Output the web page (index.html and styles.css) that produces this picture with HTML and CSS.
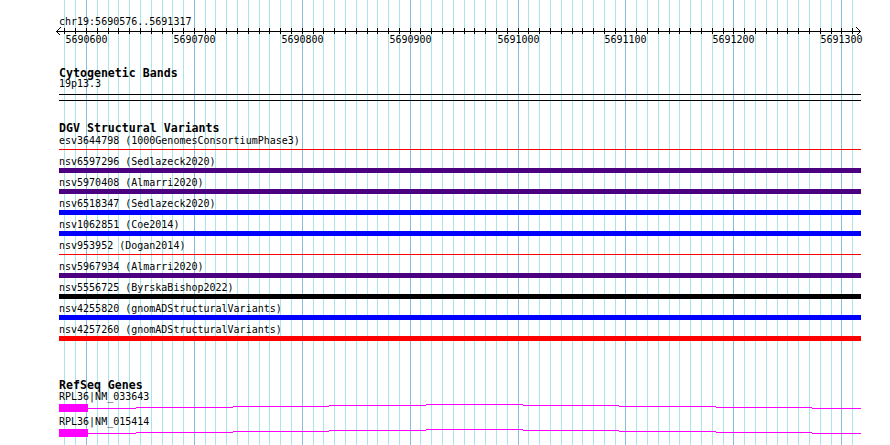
FILE: index.html
```html
<!DOCTYPE html>
<html>
<head>
  <meta charset="utf-8">
  <title>Genome Browser - chr19:5690576-5691317</title>
  <link rel="stylesheet" href="styles.css">
</head>
<body>
<div id="browser">

  <!-- base position guidelines, every 10bp (darker every 100bp) -->
  <svg class="guides" width="890" height="445" shape-rendering="crispEdges">
    <path class="minor" d="M64.5 0V445M75.5 0V445M97.5 0V445M108.5 0V445M118.5 0V445M129.5 0V445M140.5 0V445M151.5 0V445M162.5 0V445M172.5 0V445M183.5 0V445M205.5 0V445M215.5 0V445M226.5 0V445M237.5 0V445M248.5 0V445M259.5 0V445M269.5 0V445M280.5 0V445M291.5 0V445M313.5 0V445M323.5 0V445M334.5 0V445M345.5 0V445M356.5 0V445M367.5 0V445M377.5 0V445M388.5 0V445M399.5 0V445M420.5 0V445M431.5 0V445M442.5 0V445M453.5 0V445M464.5 0V445M474.5 0V445M485.5 0V445M496.5 0V445M507.5 0V445M528.5 0V445M539.5 0V445M550.5 0V445M561.5 0V445M572.5 0V445M582.5 0V445M593.5 0V445M604.5 0V445M615.5 0V445M636.5 0V445M647.5 0V445M658.5 0V445M669.5 0V445M679.5 0V445M690.5 0V445M701.5 0V445M712.5 0V445M723.5 0V445M744.5 0V445M755.5 0V445M766.5 0V445M777.5 0V445M787.5 0V445M798.5 0V445M809.5 0V445M820.5 0V445M831.5 0V445M852.5 0V445"/>
    <path class="major" d="M86.5 0V445M194.5 0V445M302.5 0V445M410.5 0V445M518.5 0V445M625.5 0V445M733.5 0V445M841.5 0V445"/>
  </svg>

  <div class="pos">chr19:5690576..5691317</div>

  <svg class="ruler" width="890" height="19" shape-rendering="crispEdges">
    <rect x="56" y="4" width="805" height="1"/>
    <polyline class="arrow" points="60.5,0.5 56.5,4.5 60.5,8.5"/>
    <polyline class="arrow" points="856.5,0.5 860.5,4.5 856.5,8.5"/>
    <path class="ticks" d="M64.5 1v6M75.5 1v6M86.5 1v6M97.5 1v6M108.5 1v6M118.5 1v6M129.5 1v6M140.5 1v6M151.5 1v6M162.5 1v6M172.5 1v6M183.5 1v6M194.5 1v6M205.5 1v6M215.5 1v6M226.5 1v6M237.5 1v6M248.5 1v6M259.5 1v6M269.5 1v6M280.5 1v6M291.5 1v6M302.5 1v6M313.5 1v6M323.5 1v6M334.5 1v6M345.5 1v6M356.5 1v6M367.5 1v6M377.5 1v6M388.5 1v6M399.5 1v6M410.5 1v6M420.5 1v6M431.5 1v6M442.5 1v6M453.5 1v6M464.5 1v6M474.5 1v6M485.5 1v6M496.5 1v6M507.5 1v6M518.5 1v6M528.5 1v6M539.5 1v6M550.5 1v6M561.5 1v6M572.5 1v6M582.5 1v6M593.5 1v6M604.5 1v6M615.5 1v6M625.5 1v6M636.5 1v6M647.5 1v6M658.5 1v6M669.5 1v6M679.5 1v6M690.5 1v6M701.5 1v6M712.5 1v6M723.5 1v6M733.5 1v6M744.5 1v6M755.5 1v6M766.5 1v6M777.5 1v6M787.5 1v6M798.5 1v6M809.5 1v6M820.5 1v6M831.5 1v6M841.5 1v6M852.5 1v6"/>
    <text x="86.5" y="16">5690600</text>
    <text x="194.5" y="16">5690700</text>
    <text x="302.5" y="16">5690800</text>
    <text x="410.5" y="16">5690900</text>
    <text x="518.5" y="16">5691000</text>
    <text x="625.5" y="16">5691100</text>
    <text x="733.5" y="16">5691200</text>
    <text x="841.5" y="16">5691300</text>
  </svg>

  <div class="track cyto">
    <div class="title">Cytogenetic Bands</div>
    <div class="label">19p13.3</div>
    <div class="band"></div>
  </div>

  <div class="track dgv">
    <div class="title">DGV Structural Variants</div>
    <div class="sv"><div class="label">esv3644798 (1000GenomesConsortiumPhase3)</div><div class="bar thin red"></div></div>
    <div class="sv"><div class="label">nsv6597296 (Sedlazeck2020)</div><div class="bar purple"></div></div>
    <div class="sv"><div class="label">nsv5970408 (Almarri2020)</div><div class="bar purple"></div></div>
    <div class="sv"><div class="label">nsv6518347 (Sedlazeck2020)</div><div class="bar blue"></div></div>
    <div class="sv"><div class="label">nsv1062851 (Coe2014)</div><div class="bar blue"></div></div>
    <div class="sv"><div class="label">nsv953952 (Dogan2014)</div><div class="bar thin red"></div></div>
    <div class="sv"><div class="label">nsv5967934 (Almarri2020)</div><div class="bar purple"></div></div>
    <div class="sv"><div class="label">nsv5556725 (ByrskaBishop2022)</div><div class="bar black"></div></div>
    <div class="sv"><div class="label">nsv4255820 (gnomADStructuralVariants)</div><div class="bar blue"></div></div>
    <div class="sv"><div class="label">nsv4257260 (gnomADStructuralVariants)</div><div class="bar red"></div></div>
  </div>

  <div class="track genes">
    <div class="title">RefSeq Genes</div>
    <div class="gene">
      <div class="label">RPL36|NM_033643</div>
      <svg class="model" width="802" height="8" shape-rendering="crispEdges">
        <rect x="0" y="0" width="29" height="8"/>
        <rect x="29" y="4" width="48" height="1"/>
        <rect x="77" y="3" width="97" height="1"/>
        <rect x="174" y="2" width="96" height="1"/>
        <rect x="270" y="1" width="97" height="1"/>
        <rect x="367" y="0" width="97" height="1"/>
        <rect x="464" y="1" width="96" height="1"/>
        <rect x="560" y="2" width="97" height="1"/>
        <rect x="657" y="3" width="96" height="1"/>
        <rect x="753" y="4" width="49" height="1"/>
      </svg>
    </div>
    <div class="gene">
      <div class="label">RPL36|NM_015414</div>
      <svg class="model" width="802" height="8" shape-rendering="crispEdges">
        <rect x="0" y="0" width="29" height="8"/>
        <rect x="29" y="4" width="48" height="1"/>
        <rect x="77" y="3" width="97" height="1"/>
        <rect x="174" y="2" width="96" height="1"/>
        <rect x="270" y="1" width="97" height="1"/>
        <rect x="367" y="0" width="97" height="1"/>
        <rect x="464" y="1" width="96" height="1"/>
        <rect x="560" y="2" width="97" height="1"/>
        <rect x="657" y="3" width="96" height="1"/>
        <rect x="753" y="4" width="49" height="1"/>
      </svg>
    </div>
  </div>

</div>
</body>
</html>
```

FILE: styles.css
```css
body {
  margin: 0;
  background-color: #fff;
  color: #000;
  font-family: "DejaVu Sans Mono", "Liberation Mono", monospace;
  font-size: 10px;
}

#browser {
  position: relative;
  width: 890px;
  height: 445px;
  overflow: hidden;
}

.guides {
  position: absolute;
  left: 0;
  top: 0;
}

.guides path {
  fill: none;
  stroke-width: 1;
}

.guides .minor {
  stroke: #a8e6ec;
}

.guides .major {
  stroke: #86bee2;
}

.pos, .ruler, .track {
  position: relative;
}

.pos {
  margin-left: 59px;
  padding-top: 17px;
  height: 10px;
  line-height: 10px;
}

.ruler {
  display: block;
}

.ruler .arrow, .ruler .ticks {
  fill: none;
  stroke: #000;
  stroke-width: 1;
}

.ruler text {
  font-family: "DejaVu Sans Mono", "Liberation Mono", monospace;
  font-size: 10px;
  text-anchor: middle;
}

.track {
  margin-left: 59px;
  width: 802px;
}

.title {
  font-weight: bold;
  font-size: 11.6px;
  line-height: 12px;
  height: 12px;
  white-space: nowrap;
}

.label {
  height: 10px;
  line-height: 10px;
  white-space: nowrap;
}

/* cytoband */
.cyto {
  margin-top: 21px;
}

.band {
  margin-top: 5px;
  height: 5px;
  border-top: 1px solid #000;
  border-bottom: 1px solid #000;
}

/* structural variants */
.dgv {
  margin-top: 21px;
}

.dgv .title {
  margin-bottom: 2px;
}

.sv {
  height: 21px;
}

.bar {
  margin-top: 1px;
  height: 5px;
}

.bar.thin {
  margin-top: 3px;
  height: 1px;
}

.red { background-color: #ff0000; }
.blue { background-color: #0000ff; }
.purple { background-color: #4b0082; }
.black { background-color: #000; }

/* genes */
.genes {
  margin-top: 33px;
}

.genes .title {
  margin-bottom: 1px;
}

.gene {
  height: 25px;
}

.model {
  display: block;
  margin-top: 2px;
  fill: #ff00ff;
}
```
